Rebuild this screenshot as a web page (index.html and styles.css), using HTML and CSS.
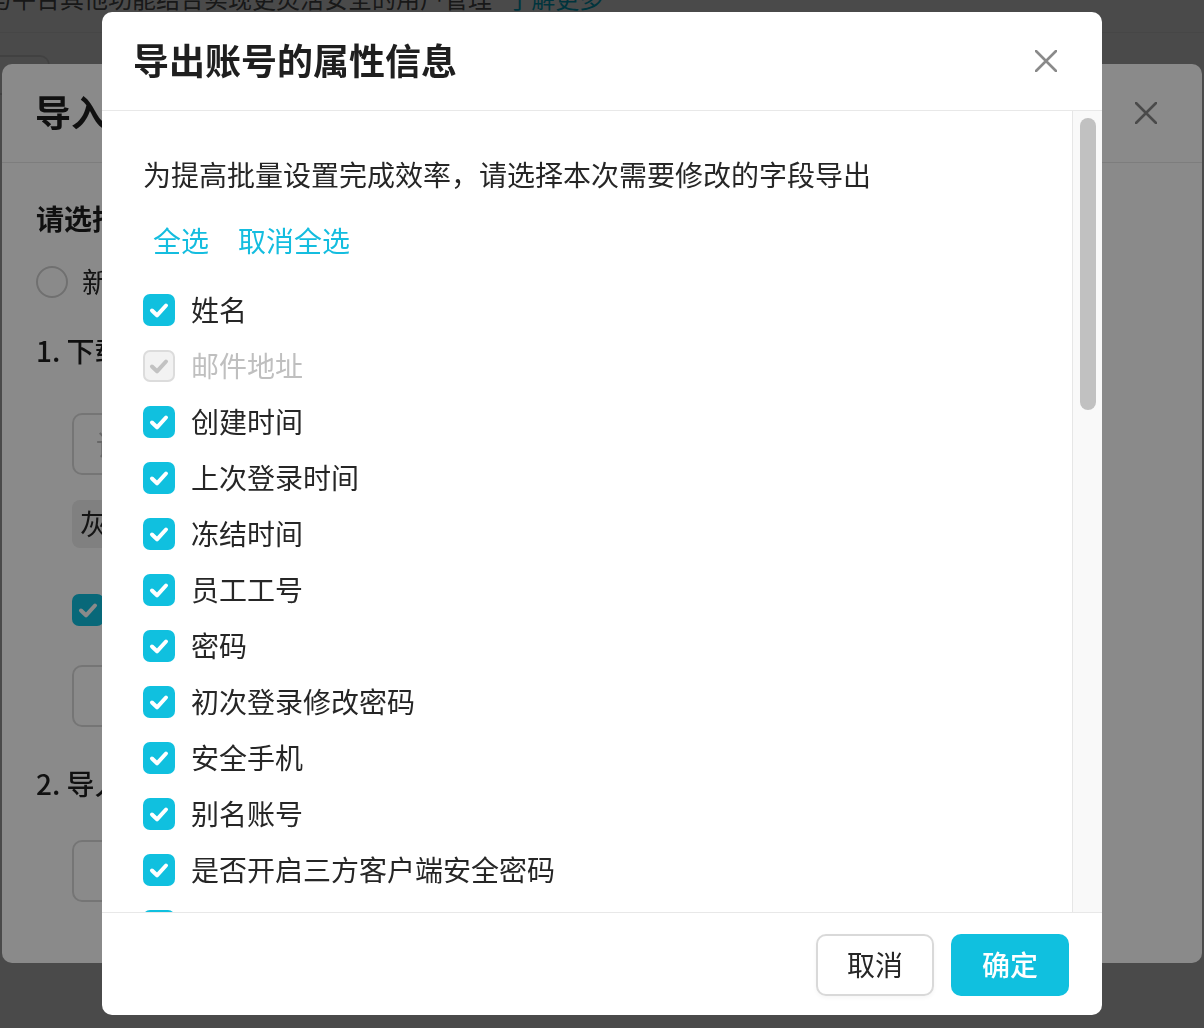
FILE: index.html
```html
<!DOCTYPE html>
<html lang="zh-CN">
<head>
<meta charset="utf-8">
<title>导出账号的属性信息</title>
<link rel="stylesheet" href="styles.css">
</head>
<body>
<div class="page">
  <p class="page-intro">与平台其他功能结合实现更灵活安全的用户管理 <a class="page-link">了解更多</a></p>
  <div class="page-toolbar"><span class="page-btn"></span></div>
</div>

<div class="mask"></div>

<section class="modal modal-import">
  <header class="modal-header">
    <h2 class="modal-title">导入账号</h2>
    <svg class="modal-close" width="22" height="22" viewBox="0 0 22 22"><path d="M1 1L21 21M21 1L1 21" stroke="#8a8a8a" stroke-width="2.6" stroke-linecap="round"/></svg>
  </header>
  <div class="import-body">
    <h3 class="import-label">请选择导入方式</h3>
    <div class="radio-row"><span class="radio"></span><span class="label">新增账号</span></div>
    <div class="step">1. 下载模板</div>
    <div class="field"><span class="placeholder">请选择模板</span></div>
    <div class="tag">灰度账号属性</div>
    <div class="import-check"><span class="cb cb-on"><svg width="32" height="32" viewBox="0 0 32 32"><path d="M9 16.5L14 21.3L23 11.5" fill="none" stroke="#fff" stroke-width="4" stroke-linecap="round" stroke-linejoin="round"/></svg></span></div>
    <div class="field field-b"></div>
    <div class="step step-2">2. 导入文件</div>
    <div class="field field-c"></div>
  </div>
</section>

<div class="mask"></div>

<section class="modal modal-export">
  <header class="modal-header export-header">
    <h2 class="modal-title export-title">导出账号的属性信息</h2>
    <svg class="modal-close" width="22" height="22" viewBox="0 0 22 22"><path d="M1 1L21 21M21 1L1 21" stroke="#8a8a8a" stroke-width="2.6" stroke-linecap="round"/></svg>
  </header>
  <div class="export-body">
    <div class="export-content">
      <p class="desc">为提高批量设置完成效率，请选择本次需要修改的字段导出</p>
      <div class="links"><a class="link">全选</a><a class="link">取消全选</a></div>
      <ul class="field-list">
        <li class="row"><span class="cb cb-on"><svg width="32" height="32" viewBox="0 0 32 32"><path d="M9 16.5L14 21.3L23 11.5" fill="none" stroke="#fff" stroke-width="4" stroke-linecap="round" stroke-linejoin="round"/></svg></span><span class="label">姓名</span></li>
        <li class="row row-disabled"><span class="cb cb-disabled"><svg width="32" height="32" viewBox="0 0 32 32"><path d="M9 16.5L14 21.3L23 11.5" fill="none" stroke="#c2c2c2" stroke-width="4" stroke-linecap="round" stroke-linejoin="round"/></svg></span><span class="label">邮件地址</span></li>
        <li class="row"><span class="cb cb-on"><svg width="32" height="32" viewBox="0 0 32 32"><path d="M9 16.5L14 21.3L23 11.5" fill="none" stroke="#fff" stroke-width="4" stroke-linecap="round" stroke-linejoin="round"/></svg></span><span class="label">创建时间</span></li>
        <li class="row"><span class="cb cb-on"><svg width="32" height="32" viewBox="0 0 32 32"><path d="M9 16.5L14 21.3L23 11.5" fill="none" stroke="#fff" stroke-width="4" stroke-linecap="round" stroke-linejoin="round"/></svg></span><span class="label">上次登录时间</span></li>
        <li class="row"><span class="cb cb-on"><svg width="32" height="32" viewBox="0 0 32 32"><path d="M9 16.5L14 21.3L23 11.5" fill="none" stroke="#fff" stroke-width="4" stroke-linecap="round" stroke-linejoin="round"/></svg></span><span class="label">冻结时间</span></li>
        <li class="row"><span class="cb cb-on"><svg width="32" height="32" viewBox="0 0 32 32"><path d="M9 16.5L14 21.3L23 11.5" fill="none" stroke="#fff" stroke-width="4" stroke-linecap="round" stroke-linejoin="round"/></svg></span><span class="label">员工工号</span></li>
        <li class="row"><span class="cb cb-on"><svg width="32" height="32" viewBox="0 0 32 32"><path d="M9 16.5L14 21.3L23 11.5" fill="none" stroke="#fff" stroke-width="4" stroke-linecap="round" stroke-linejoin="round"/></svg></span><span class="label">密码</span></li>
        <li class="row"><span class="cb cb-on"><svg width="32" height="32" viewBox="0 0 32 32"><path d="M9 16.5L14 21.3L23 11.5" fill="none" stroke="#fff" stroke-width="4" stroke-linecap="round" stroke-linejoin="round"/></svg></span><span class="label">初次登录修改密码</span></li>
        <li class="row"><span class="cb cb-on"><svg width="32" height="32" viewBox="0 0 32 32"><path d="M9 16.5L14 21.3L23 11.5" fill="none" stroke="#fff" stroke-width="4" stroke-linecap="round" stroke-linejoin="round"/></svg></span><span class="label">安全手机</span></li>
        <li class="row"><span class="cb cb-on"><svg width="32" height="32" viewBox="0 0 32 32"><path d="M9 16.5L14 21.3L23 11.5" fill="none" stroke="#fff" stroke-width="4" stroke-linecap="round" stroke-linejoin="round"/></svg></span><span class="label">别名账号</span></li>
        <li class="row"><span class="cb cb-on"><svg width="32" height="32" viewBox="0 0 32 32"><path d="M9 16.5L14 21.3L23 11.5" fill="none" stroke="#fff" stroke-width="4" stroke-linecap="round" stroke-linejoin="round"/></svg></span><span class="label">是否开启三方客户端安全密码</span></li>
        <li class="row"><span class="cb cb-on"><svg width="32" height="32" viewBox="0 0 32 32"><path d="M9 16.5L14 21.3L23 11.5" fill="none" stroke="#fff" stroke-width="4" stroke-linecap="round" stroke-linejoin="round"/></svg></span></li>
      </ul>
    </div>
    <div class="scroll-track"><div class="scroll-thumb"></div></div>
  </div>
  <footer class="modal-footer">
    <button class="btn btn-cancel">取消</button>
    <button class="btn btn-primary">确定</button>
  </footer>
</section>
</body>
</html>
```

FILE: styles.css
```css
* { box-sizing: border-box; }

html, body {
  margin: 0;
  padding: 0;
  width: 1204px;
  height: 1028px;
  overflow: hidden;
  background: #ffffff;
  font-family: "Noto Sans CJK SC", "Noto Sans", sans-serif;
  color: #262626;
}

.page {
  width: 1204px;
  height: 1028px;
}

.page-intro {
  margin: -18px 0 0 -12px;
  font-size: 24px;
  line-height: 32px;
  color: #555;
  white-space: nowrap;
}

.page-link {
  color: #00b3d1;
  margin-left: 10px;
}

.page-toolbar {
  margin-top: 18px;
  border-top: 1px solid #f0f0f0;
  padding-top: 22px;
}

.page-btn {
  display: block;
  width: 50px;
  height: 40px;
  border: 2px solid #e0e0e0;
  border-left: none;
  border-radius: 0 10px 10px 0;
}

.mask {
  position: fixed;
  inset: 0;
  background: rgba(0, 0, 0, 0.46);
}

.modal {
  position: absolute;
  background: #ffffff;
  border-radius: 10px;
  display: flex;
  flex-direction: column;
  overflow: hidden;
}

.modal-header {
  height: 99px;
  flex: none;
  display: flex;
  align-items: center;
  justify-content: space-between;
  border-bottom: 1px solid #e8e8e8;
  padding: 0 45px 0 33px;
}

.modal-title {
  margin: 0;
  padding-bottom: 4px;
  font-size: 36px;
  font-weight: 700;
  color: #1f1f1f;
  line-height: 48px;
}

.modal-close { flex: none; }

.label { padding-bottom: 3px; }

/* ---------- background import modal ---------- */
.modal-import {
  left: 2px;
  top: 64px;
  width: 1200px;
  height: 899px;
}

.import-body {
  padding: 0 0 0 34px;
}

.import-label {
  margin: 35px 0 0;
  font-size: 28px;
  line-height: 40px;
  font-weight: 700;
  color: #1f1f1f;
}

.radio-row {
  margin-top: 24px;
  height: 40px;
  display: flex;
  align-items: center;
  gap: 14px;
  font-size: 28px;
  color: #262626;
}

.radio {
  width: 32px;
  height: 32px;
  border-radius: 50%;
  border: 2px solid #cfcfcf;
}

.step {
  margin-top: 28px;
  font-size: 28px;
  line-height: 40px;
  font-weight: 500;
  color: #1f1f1f;
}

.step-2 { margin-top: 36px; }

.field {
  margin: 43px 0 0 36px;
  width: 640px;
  height: 62px;
  border: 2px solid #d9d9d9;
  border-radius: 10px;
  display: flex;
  align-items: center;
  padding-left: 22px;
  font-size: 28px;
}

.field-b { margin-top: 39px; }
.field-c { margin-top: 37px; }

.placeholder { color: #bfbfbf; }

.tag {
  margin: 25px 0 0 36px;
  width: 300px;
  height: 48px;
  background: #ececec;
  border-radius: 8px;
  padding-left: 8px;
  font-size: 28px;
  line-height: 46px;
  color: #262626;
}

.import-check {
  margin: 46px 0 0 36px;
  height: 32px;
  display: flex;
}

/* ---------- export modal ---------- */
.modal-export {
  left: 102px;
  top: 12px;
  width: 1000px;
  height: 1003px;
}

.export-header { padding-left: 31px; }

.export-body {
  flex: 1;
  display: flex;
  min-height: 0;
}

.export-content {
  flex: 1;
  overflow: hidden;
  padding: 43px 0 0 41px;
}

.desc {
  margin: 0;
  font-size: 28px;
  line-height: 40px;
  color: #262626;
}

.links {
  margin-top: 26px;
  display: flex;
  gap: 29px;
  padding-left: 10px;
  font-size: 28px;
  line-height: 40px;
}

.link {
  color: #14bddf;
  cursor: pointer;
}

.field-list {
  list-style: none;
  margin: 22px 0 0;
  padding: 0;
}

.row {
  height: 56px;
  display: flex;
  align-items: center;
  gap: 16px;
  font-size: 28px;
  color: #262626;
}

.row-disabled { color: #bfbfbf; }

.cb {
  width: 32px;
  height: 32px;
  flex: none;
  border-radius: 7px;
  display: block;
  position: relative;
}

.cb svg {
  display: block;
  position: absolute;
  left: 0;
  top: 0;
}

.cb-on { background: #10c0df; }

.cb-disabled {
  background: #f2f2f2;
  border: 2px solid #dcdcdc;
}

.cb-disabled svg { left: -2px; top: -2px; }

.scroll-track {
  width: 30px;
  flex: none;
  background: #f9f9f9;
  border-left: 1px solid #e6e6e6;
  padding: 7px 0 0 7px;
}

.scroll-thumb {
  width: 16px;
  height: 292px;
  border-radius: 8px;
  background: #c1c1c1;
}

.modal-footer {
  flex: none;
  height: 103px;
  border-top: 1px solid #e8e8e8;
  display: flex;
  justify-content: flex-end;
  align-items: flex-start;
  gap: 17px;
  padding: 21px 33px 0 0;
}

.btn {
  width: 118px;
  height: 62px;
  border-radius: 10px;
  font-family: "Noto Sans CJK SC", "Noto Sans", sans-serif;
  font-size: 28px;
  line-height: 1;
  padding: 0 0 3px;
  cursor: pointer;
}

.btn-cancel {
  background: #ffffff;
  border: 2px solid #d9d9d9;
  color: #262626;
  box-shadow: 0 2px 4px rgba(0, 0, 0, 0.04);
}

.btn-primary {
  background: #10c0df;
  border: none;
  color: #ffffff;
  font-weight: 500;
}
```
